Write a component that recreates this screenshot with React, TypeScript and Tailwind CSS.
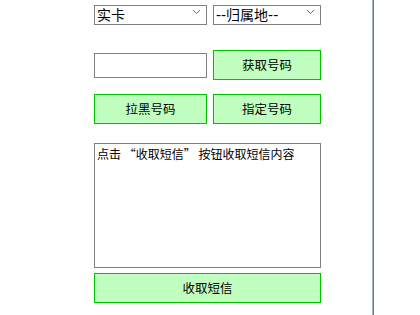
import React from "react";

const font = { fontFamily: '"Noto Sans CJK SC", "Liberation Sans", sans-serif' };
const selectFont = { fontFamily: '"DejaVu Sans", "Noto Sans CJK SC", sans-serif' };

function Chevron() {
  return (
    <svg width="9" height="6" viewBox="0 0 9 6" className="pointer-events-none absolute right-[6px] top-[8px]">
      <path d="M1 1l3.5 3.5L8 1" fill="none" stroke="#6b6b6b" strokeWidth="1" />
    </svg>
  );
}

function FakeSelect({ label }: { label: string }) {
  return (
    <div className="relative h-[20px]">
      <select
        defaultValue={label}
        className="h-full w-full appearance-none border border-[#808080] bg-white pl-[2px] text-[14px] leading-[18px] text-black outline-none"
        style={selectFont}
      >
        <option>{label}</option>
      </select>
      <Chevron />
    </div>
  );
}

function GreenButton({ children }: { children: React.ReactNode }) {
  return (
    <button
      className="h-[30px] w-full border border-[#00c400] bg-[#c0ffc0] text-[12.5px] text-black"
      style={font}
    >
      {children}
    </button>
  );
}

export default function App() {
  return (
    <div className="flex h-[315px] w-[420px] overflow-hidden bg-white" style={font}>
      <div className="w-[372px] shrink-0 pl-[94px] pt-[1px]">
        <div className="w-[227px]">
          <div className="grid grid-cols-[113px_108px] gap-x-[6px]">
            <FakeSelect label="实卡" />
            <FakeSelect label="--归属地--" />
          </div>

          <div className="mt-[29px] grid grid-cols-[113px_108px] items-center gap-x-[6px]">
            <input className="h-[25px] w-full border border-[#808080] bg-white px-1 text-[12px] outline-none" />
            <GreenButton>获取号码</GreenButton>
          </div>

          <div className="mt-[14px] grid grid-cols-[113px_108px] gap-x-[6px]">
            <GreenButton>拉黑号码</GreenButton>
            <GreenButton>指定号码</GreenButton>
          </div>

          <textarea
            readOnly
            defaultValue={"点击 “收取短信” 按钮收取短信内容"}
            className="mt-[19px] block h-[125px] w-full resize-none border border-[#808080] bg-white px-[2px] pt-[1px] text-[12px] leading-[17px] text-black outline-none"
            style={font}
          />

          <div className="mt-[5px]">
            <GreenButton>收取短信</GreenButton>
          </div>
        </div>
      </div>
      <div className="w-px shrink-0 bg-[#a9b8c8]" />
      <div className="w-px shrink-0 bg-[#2f86d6]" />
      <div className="flex-1" />
    </div>
  );
}
